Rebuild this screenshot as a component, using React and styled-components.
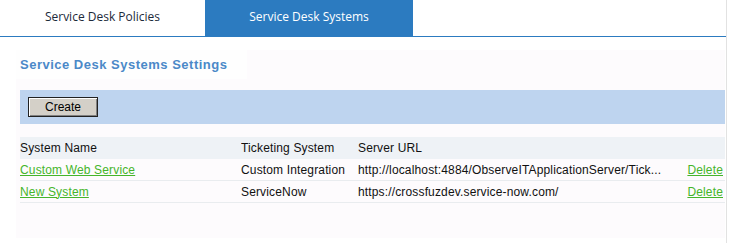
import React from 'react'
import styled, { createGlobalStyle } from 'styled-components'

const GlobalStyle = createGlobalStyle`
  body {
    margin: 0;
    background: #fff;
    font-family: "Liberation Sans", Arial, sans-serif;
  }
`;

const Page = styled.div`
  width: 727px;
  height: 243px;
  border-right: 1px solid #e2e2e2;
  box-sizing: border-box;
  overflow: hidden;
`;

const Tabs = styled.div`
  display: flex;
  height: 37px;
  border-bottom: 1px solid #2c7bc0;
  box-sizing: border-box;
`;

const Tab = styled.div`
  width: ${p => p.w}px;
  display: flex;
  align-items: center;
  justify-content: center;
  padding-bottom: 4px;
  box-sizing: border-box;
  font-family: "Open Sans", sans-serif;
  font-size: 12px;
  color: ${p => (p.active ? '#fff' : '#1c2a3a')};
  background: ${p => (p.active ? '#2c7bc0' : '#fff')};
`;

const Panel = styled.div`
  margin: 13px 1px 0 16px;
  height: 188px;
  background: #fdfbfd;
  padding: 0 0 0 4px;
  display: flex;
  flex-direction: column;
`;

const HeadingBox = styled.div`
  align-self: flex-start;
  margin-left: -4px;
  padding: 0 20px 0 4px;
  height: 29px;
  display: flex;
  align-items: center;
  background: #fefefe;
`;

const Heading = styled.div`
  font-size: 13px;
  font-weight: bold;
  color: #4b89c8;
  letter-spacing: 0.5px;
`;

const Toolbar = styled.div`
  margin-top: 11px;
  height: 34px;
  background: #bed4ef;
  padding: 7px 8px;
  box-sizing: border-box;
`;

const Button = styled.button`
  width: 70px;
  height: 20px;
  background: #d4d0c8;
  border: 1px solid #222;
  box-shadow: inset 1px 1px 0 #fff, inset -1px -1px 0 #808080;
  font-family: "Liberation Sans", Arial, sans-serif;
  font-size: 12px;
  color: #000;
  padding: 0;
`;

const Table = styled.div`
  margin-top: 13px;
  display: flex;
  flex-direction: column;
`;

const Row = styled.div`
  display: grid;
  grid-template-columns: 221px 117px 1fr 50px;
  align-items: center;
  height: 22px;
  box-sizing: border-box;
  font-size: 12px;
  letter-spacing: 0.15px;
  color: #111;
  background: ${p => (p.header ? '#eef2f6' : 'transparent')};
  border-bottom: ${p => (p.header ? 'none' : '1px solid #e9ecef')};
`;

const Cell = styled.div`
  white-space: nowrap;
  overflow: hidden;
  text-align: ${p => (p.right ? 'right' : 'left')};
  padding-right: ${p => (p.right ? '2px' : '0')};
`;

const LinkText = styled.a`
  color: #45b52a;
  text-decoration: underline;
  cursor: pointer;
`;

const rows = [
  {
    name: 'Custom Web Service',
    system: 'Custom Integration',
    url: 'http://localhost:4884/ObserveITApplicationServer/Tick...'
  },
  {
    name: 'New System',
    system: 'ServiceNow',
    url: 'https://crossfuzdev.service-now.com/'
  }
];

export default function App() {
  return (
    <>
      <GlobalStyle />
      <Page>
        <Tabs>
          <Tab w={205}>Service Desk Policies</Tab>
          <Tab w={208} active>Service Desk Systems</Tab>
        </Tabs>
        <Panel>
          <HeadingBox>
            <Heading>Service Desk Systems Settings</Heading>
          </HeadingBox>
          <Toolbar>
            <Button>Create</Button>
          </Toolbar>
          <Table>
            <Row header>
              <Cell>System Name</Cell>
              <Cell>Ticketing System</Cell>
              <Cell>Server URL</Cell>
              <Cell />
            </Row>
            {rows.map(r => (
              <Row key={r.name}>
                <Cell><LinkText>{r.name}</LinkText></Cell>
                <Cell>{r.system}</Cell>
                <Cell>{r.url}</Cell>
                <Cell right><LinkText>Delete</LinkText></Cell>
              </Row>
            ))}
          </Table>
        </Panel>
      </Page>
    </>
  )
}
